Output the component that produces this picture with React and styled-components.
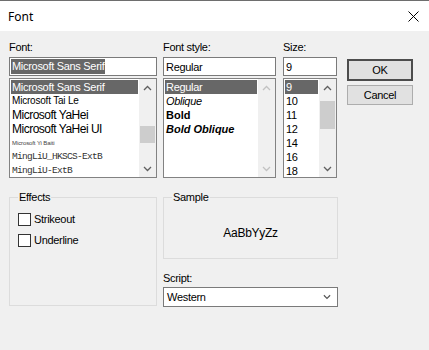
import styled, { createGlobalStyle } from "styled-components";

const GlobalStyle = createGlobalStyle`
  * {
    box-sizing: border-box;
  }

  html,
  body {
    margin: 0;
    background: #f0f0f0;
  }

  body {
    font-family: "Liberation Sans", Arial, sans-serif;
    font-size: 11px;
    letter-spacing: -0.3px;
    color: #000;
  }
`;

const Window = styled.div`
  width: 429px;
  height: 350px;
  background: #f0f0f0;
  overflow: hidden;
`;

const TitleBar = styled.div`
  height: 31px;
  border-top: 1px solid #6e6e6e;
  background: #fff;
  display: flex;
  align-items: center;
  justify-content: space-between;
  padding: 0 10px 0 8px;
`;

const Title = styled.span`
  font-family: "Noto Sans", "Open Sans", sans-serif;
  font-size: 12px;
  letter-spacing: 0;
`;

const Body = styled.div`
  padding: 10px 0 0 9px;
`;

const TopRow = styled.div`
  display: flex;
  align-items: flex-start;
`;

const Column = styled.div`
  width: ${(p) => p.$width}px;
  margin-left: ${(p) => p.$offset || 0}px;
`;

const Label = styled.div`
  height: 13px;
  line-height: 13px;
  margin-bottom: 3px;
`;

const TextBox = styled.div`
  height: 19px;
  border: 1px solid #7a7a7a;
  background: #fff;
  padding: 0 2px;
  display: flex;
  align-items: center;
  white-space: nowrap;
  overflow: hidden;
`;

const Highlight = styled.span`
  display: inline-block;
  line-height: 15px;
  margin-left: -1px;
  padding: 0 1px;
  background: #676767;
  color: #fff;
`;

const ListBox = styled.div`
  height: 100px;
  margin-top: 2px;
  border: 1px solid #828282;
  background: #fff;
  display: flex;
`;

const Items = styled.ul`
  flex: 1;
  min-width: 0;
  list-style: none;
  margin: 0;
  padding: 1px;
  overflow: hidden;
`;

const Item = styled.li`
  height: 14px;
  line-height: 14px;
  padding-left: 1px;
  white-space: nowrap;
  overflow: hidden;
  font-family: ${(p) => p.$family || '"Liberation Sans", Arial, sans-serif'};
  font-size: ${(p) => p.$size || 11}px;
  font-weight: ${(p) => (p.$bold ? 700 : 400)};
  font-style: ${(p) => (p.$italic ? "italic" : "normal")};
  letter-spacing: ${(p) => p.$spacing ?? -0.3}px;
  color: ${(p) => (p.$selected ? "#fff" : p.$color || "#000")};
  background: ${(p) => (p.$selected ? "#676767" : "transparent")};
`;

const ScrollBar = styled.div`
  width: 17px;
  flex-shrink: 0;
  display: flex;
  flex-direction: column;
  background: #f0f0f0;
`;

const ArrowButton = styled.div`
  height: 17px;
  display: flex;
  align-items: center;
  justify-content: center;
  color: ${(p) => (p.$disabled ? "#c2c2c2" : "#606060")};
`;

const Track = styled.div`
  flex: 1;
`;

const Thumb = styled.div`
  margin: ${(p) => p.$top}px 1px 0;
  height: ${(p) => p.$height}px;
  background: #cdcdcd;
`;

const ButtonColumn = styled.div`
  width: 66px;
  margin: 18px 0 0 10px;
  display: flex;
  flex-direction: column;
  gap: 4px;
`;

const Button = styled.button`
  height: ${(p) => (p.$default ? 22 : 20)}px;
  border: ${(p) => (p.$default ? "2px solid #4d4d4d" : "1px solid #adadad")};
  background: #e1e1e1;
  padding: 0;
  font-family: "Liberation Sans", Arial, sans-serif;
  font-size: 11px;
  letter-spacing: -0.3px;
  color: #000;
`;

const BottomRow = styled.div`
  display: flex;
  align-items: flex-start;
  gap: 6px;
  margin-top: 13px;
`;

const Group = styled.fieldset`
  margin: 0;
  min-width: 0;
  width: ${(p) => p.$width}px;
  height: ${(p) => p.$height}px;
  border: 1px solid #dcdcdc;
  padding: 0 8px;
`;

const Legend = styled.legend`
  padding: 0 1px;
  line-height: 13px;
`;

const CheckList = styled.div`
  display: flex;
  flex-direction: column;
  gap: 8px;
  padding-top: 9px;
`;

const CheckRow = styled.label`
  display: flex;
  align-items: center;
  gap: 3px;
  line-height: 13px;
`;

const CheckBox = styled.span`
  width: 13px;
  height: 13px;
  border: 1px solid #333;
  background: #fff;
`;

const SampleText = styled.div`
  padding-top: 22px;
  text-align: center;
  font-size: 12px;
  line-height: 14px;
`;

const RightColumn = styled.div`
  width: 175px;
  display: flex;
  flex-direction: column;
`;

const ScriptLabel = styled.div`
  margin: 13px 0 2px;
  line-height: 13px;
`;

const Select = styled.div`
  height: 20px;
  border: 1px solid #7a7a7a;
  background: #fff;
  display: flex;
  align-items: center;
  justify-content: space-between;
  padding: 0 6px 0 3px;
`;

const fonts = [
  { name: "Microsoft Sans Serif", selected: true },
  { name: "Microsoft Tai Le", size: 10, spacing: -0.2 },
  { name: "Microsoft YaHei", size: 12, spacing: -0.5 },
  { name: "Microsoft YaHei UI", size: 12, spacing: -0.5 },
  { name: "Microsoft Yi Baiti", size: 6, spacing: -0.1, color: "#444" },
  {
    name: "MingLiU_HKSCS-ExtB",
    family: '"Liberation Mono", monospace',
    size: 9.5,
    spacing: -0.7,
    color: "#333",
  },
  {
    name: "MingLiU-ExtB",
    family: '"Liberation Mono", monospace',
    size: 9.5,
    spacing: -0.7,
    color: "#333",
  },
];

const styles = [
  { name: "Regular", selected: true },
  { name: "Oblique", italic: true },
  { name: "Bold", bold: true, spacing: 0 },
  { name: "Bold Oblique", bold: true, italic: true, spacing: 0 },
];

const sizes = ["9", "10", "11", "12", "14", "16", "18"];

function Chevron({ up, width = 9, color = "currentColor" }) {
  return (
    <svg width={width} height="6" viewBox="0 0 9 6">
      <polyline
        points={up ? "1,5 4.5,1.5 8,5" : "1,1 4.5,4.5 8,1"}
        fill="none"
        stroke={color}
        strokeWidth="1.3"
      />
    </svg>
  );
}

function CloseIcon() {
  return (
    <svg width="11" height="11" viewBox="0 0 11 11">
      <path d="M0.5 0.5 L10.5 10.5 M10.5 0.5 L0.5 10.5" stroke="#000" strokeWidth="1" />
    </svg>
  );
}

function VScroll({ thumb, disabled }) {
  return (
    <ScrollBar>
      <ArrowButton $disabled={disabled}>
        <Chevron up />
      </ArrowButton>
      <Track>{thumb && <Thumb $top={thumb.top} $height={thumb.height} />}</Track>
      <ArrowButton $disabled={disabled}>
        <Chevron />
      </ArrowButton>
    </ScrollBar>
  );
}

function renderItem(item) {
  return (
    <Item
      key={item.name}
      $selected={item.selected}
      $family={item.family}
      $size={item.size}
      $bold={item.bold}
      $italic={item.italic}
      $spacing={item.spacing}
      $color={item.color}
    >
      {item.name}
    </Item>
  );
}

export default function App() {
  return (
    <Window>
      <GlobalStyle />
      <TitleBar>
        <Title>Font</Title>
        <CloseIcon />
      </TitleBar>

      <Body>
        <TopRow>
          <Column $width={148}>
            <Label>Font:</Label>
            <TextBox>
              <Highlight>Microsoft Sans Serif</Highlight>
            </TextBox>
            <ListBox>
              <Items>{fonts.map(renderItem)}</Items>
              <VScroll thumb={{ top: 30, height: 17 }} />
            </ListBox>
          </Column>

          <Column $width={113} $offset={6}>
            <Label>Font style:</Label>
            <TextBox>Regular</TextBox>
            <ListBox>
              <Items>{styles.map(renderItem)}</Items>
              <VScroll disabled />
            </ListBox>
          </Column>

          <Column $width={54} $offset={7}>
            <Label>Size:</Label>
            <TextBox>9</TextBox>
            <ListBox>
              <Items>
                {sizes.map((s, i) => renderItem({ name: s, selected: i === 0 }))}
              </Items>
              <VScroll thumb={{ top: 5, height: 28 }} />
            </ListBox>
          </Column>

          <ButtonColumn>
            <Button $default>OK</Button>
            <Button>Cancel</Button>
          </ButtonColumn>
        </TopRow>

        <BottomRow>
          <Group $width={148} $height={115}>
            <Legend>Effects</Legend>
            <CheckList>
              <CheckRow>
                <CheckBox />
                Strikeout
              </CheckRow>
              <CheckRow>
                <CheckBox />
                Underline
              </CheckRow>
            </CheckList>
          </Group>

          <RightColumn>
            <Group $width={175} $height={68}>
              <Legend>Sample</Legend>
              <SampleText>AaBbYyZz</SampleText>
            </Group>
            <ScriptLabel>Script:</ScriptLabel>
            <Select>
              Western
              <Chevron width={8} color="#555" />
            </Select>
          </RightColumn>
        </BottomRow>
      </Body>
    </Window>
  );
}
